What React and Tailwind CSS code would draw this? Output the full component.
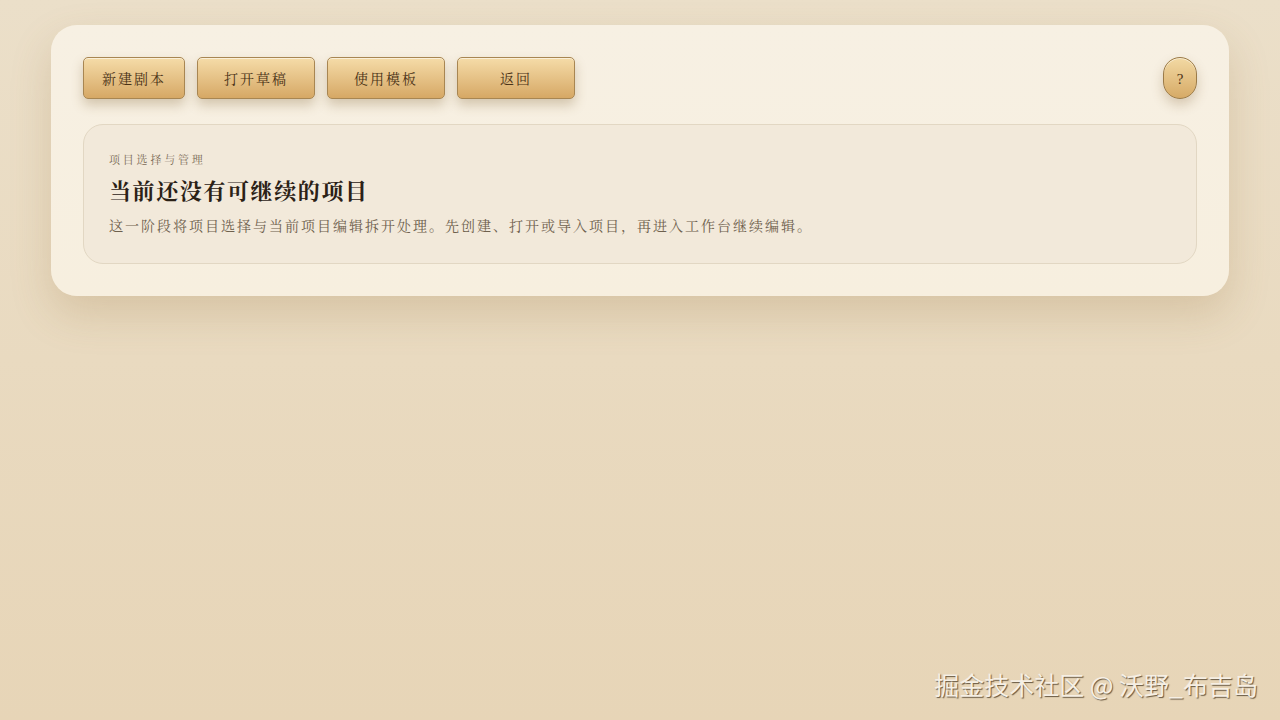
import React from "react";

const actions = [
  { label: "新建剧本", w: "w-[102px]" },
  { label: "打开草稿", w: "w-[118px]" },
  { label: "使用模板", w: "w-[118px]" },
  { label: "返回", w: "w-[118px]" },
];

const serif = "font-['Liberation_Serif','Noto_Serif_CJK_SC','Noto_Sans_CJK_SC',serif]";

export default function App() {
  return (
    <div className={`relative min-h-[720px] w-full bg-gradient-to-b from-[#ebdfc9] to-[#e7d5b7] pt-[25px] ${serif}`}>
      <div className="mx-[51px] rounded-[26px] bg-gradient-to-b from-[#f7f0e3] to-[#f7efdf] p-8 shadow-[0_18px_40px_rgba(150,115,60,0.22)]">
        <div className="flex items-center justify-between">
          <div className="flex gap-3">
            {actions.map((a) => (
              <button
                key={a.label}
                className={`${a.w} h-[42px] rounded-[5px] border border-[#a88652] bg-gradient-to-b from-[#f5dca8] to-[#d6a865] pt-[3px] text-[14px] tracking-[2px] text-[#4a3216] shadow-[0_6px_12px_rgba(120,85,35,0.28),inset_0_1px_0_rgba(255,255,255,0.55)]`}
              >
                {a.label}
              </button>
            ))}
          </div>
          <button className="flex h-[42px] w-[34px] items-center justify-center rounded-full border border-[#9b7b48] bg-gradient-to-b from-[#f2d9a3] to-[#d6aa66] pt-[3px] text-[15px] text-[#4a3216] shadow-[0_6px_12px_rgba(120,85,35,0.25),inset_0_1px_0_rgba(255,255,255,0.5)]">
            ?
          </button>
        </div>

        <div className="mt-[25px] h-[140px] rounded-[20px] border border-[#e2d7c3] bg-[#f2e9da] px-[25px] pt-[27px]">
          <div className="text-[11px] tracking-[2.8px] text-[#7a6a55]">项目选择与管理</div>
          <h1 className="mt-[6px] text-[22px] font-bold tracking-[1.6px] text-[#2b2116]">当前还没有可继续的项目</h1>
          <p className="mt-[8px] text-[14px] tracking-[2px] text-[#6e604d]">
            这一阶段将项目选择与当前项目编辑拆开处理。先创建、打开或导入项目，再进入工作台继续编辑。
          </p>
        </div>
      </div>

      <div className="absolute bottom-[17px] right-[22px] font-['Noto_Sans_CJK_SC',sans-serif] text-[25px] text-[#f6efe4] [text-shadow:1px_1px_1px_rgba(70,55,35,0.8)]">
        掘金技术社区 @ 沃野_布吉岛
      </div>
    </div>
  );
}
